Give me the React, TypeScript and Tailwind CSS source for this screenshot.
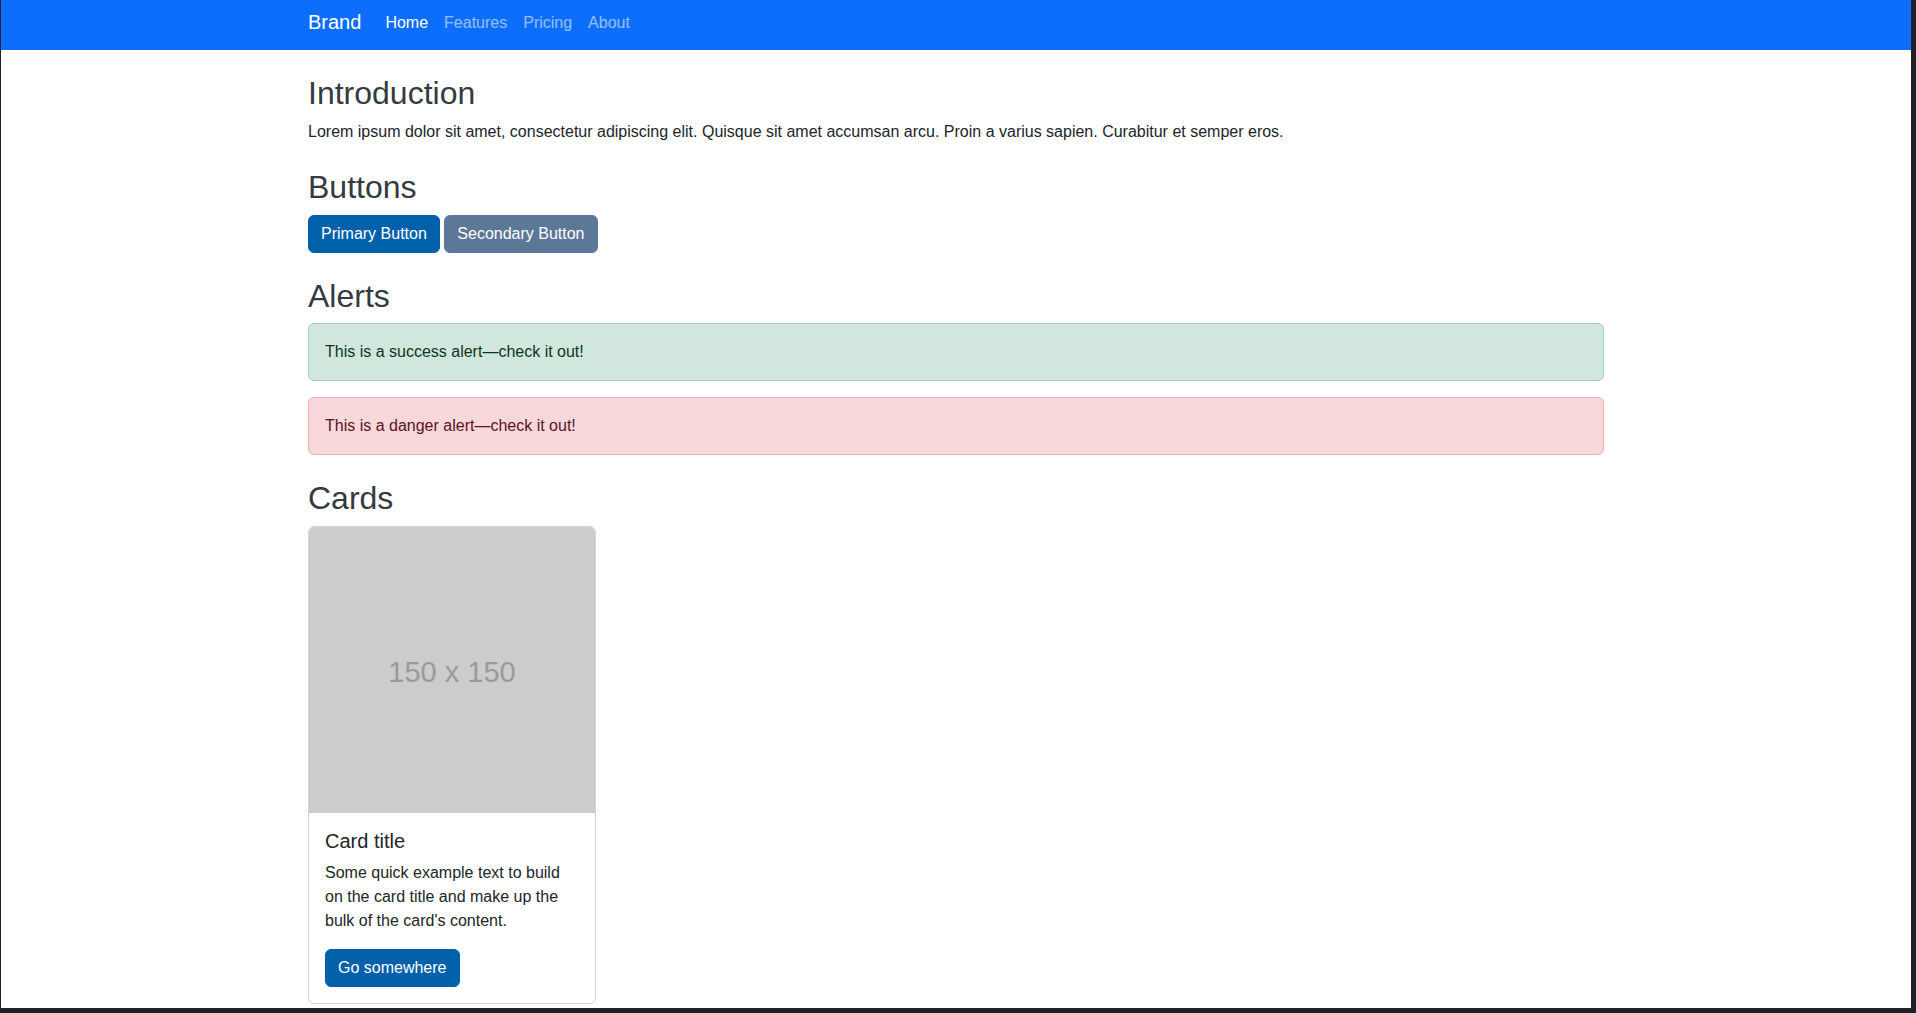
import React from 'react';

const navLinks = [
  { label: 'Home', active: true },
  { label: 'Features', active: false },
  { label: 'Pricing', active: false },
  { label: 'About', active: false },
];

function SectionTitle({ children }: { children: React.ReactNode }) {
  return <h2 className="text-[32px] leading-[1.2] font-normal text-[#343a40] mb-2">{children}</h2>;
}

export default function App() {
  return (
    <div className="h-screen w-full bg-[#1f2028] pl-px pr-[5px] pb-[5px] flex font-['Liberation_Sans',Arial,sans-serif] text-[#212529]">
      <div className="flex-1 bg-white overflow-hidden flex flex-col">
        {/* top navbar */}
        <nav className="h-[50px] shrink-0 bg-[#0d6efd]">
          <div className="w-[1320px] mx-auto px-3 pt-[7px] flex items-center">
            <a href="#" className="text-[20px] leading-[30px] text-white mr-4">Brand</a>
            <ul className="flex items-center mt-[2px]">
              {navLinks.map((link) => (
                <li key={link.label}>
                  <a
                    href="#"
                    className={`block px-2 text-base leading-6 ${link.active ? 'text-white' : 'text-white/55'}`}
                  >
                    {link.label}
                  </a>
                </li>
              ))}
            </ul>
          </div>
        </nav>

        {/* main content */}
        <main className="w-[1320px] mx-auto px-3 pt-6">
          <section className="mb-6">
            <SectionTitle>Introduction</SectionTitle>
            <p className="text-base leading-6">
              Lorem ipsum dolor sit amet, consectetur adipiscing elit. Quisque sit amet accumsan arcu. Proin a varius sapien. Curabitur et semper eros.
            </p>
          </section>

          <section className="mb-6">
            <SectionTitle>Buttons</SectionTitle>
            <div className="flex gap-[4.5px]">
              <button className="h-[38px] px-3 rounded-md border border-[#0060aa] bg-[#0060aa] text-white text-base leading-6">
                Primary Button
              </button>
              <button className="h-[38px] px-3 rounded-md border border-[#5c7797] bg-[#5c7797] text-white text-base leading-6">
                Secondary Button
              </button>
            </div>
          </section>

          <section className="mb-6">
            <SectionTitle>Alerts</SectionTitle>
            <div className="flex flex-col gap-4">
              <div className="p-4 rounded-md border border-[#a3cfbb] bg-[#d1e7dd] text-[#0a3622] text-base leading-6">
                This is a success alert—check it out!
              </div>
              <div className="p-4 rounded-md border border-[#f1aeb5] bg-[#f8d7da] text-[#58151c] text-base leading-6">
                This is a danger alert—check it out!
              </div>
            </div>
          </section>

          <section>
            <SectionTitle>Cards</SectionTitle>
            <div className="w-[288px] rounded-md border border-[#d3d4d5] overflow-hidden">
              <div className="h-[286px] bg-[#cccccc] rounded-t-[5px] pt-[7px] flex items-center justify-center">
                <span className="text-[29px] text-[#9a9a9a]">150 x 150</span>
              </div>
              <div className="p-4">
                <h5 className="text-[20px] leading-[1.2] text-[#212529] mb-2">Card title</h5>
                <p className="text-base leading-6 mb-4">
                  Some quick example text to build on the card title and make up the bulk of the card's content.
                </p>
                <a
                  href="#"
                  className="inline-flex items-center h-[38px] px-3 rounded-md border border-[#0060aa] bg-[#0060aa] text-white text-base leading-6"
                >
                  Go somewhere
                </a>
              </div>
            </div>
          </section>
        </main>
      </div>
    </div>
  );
}
